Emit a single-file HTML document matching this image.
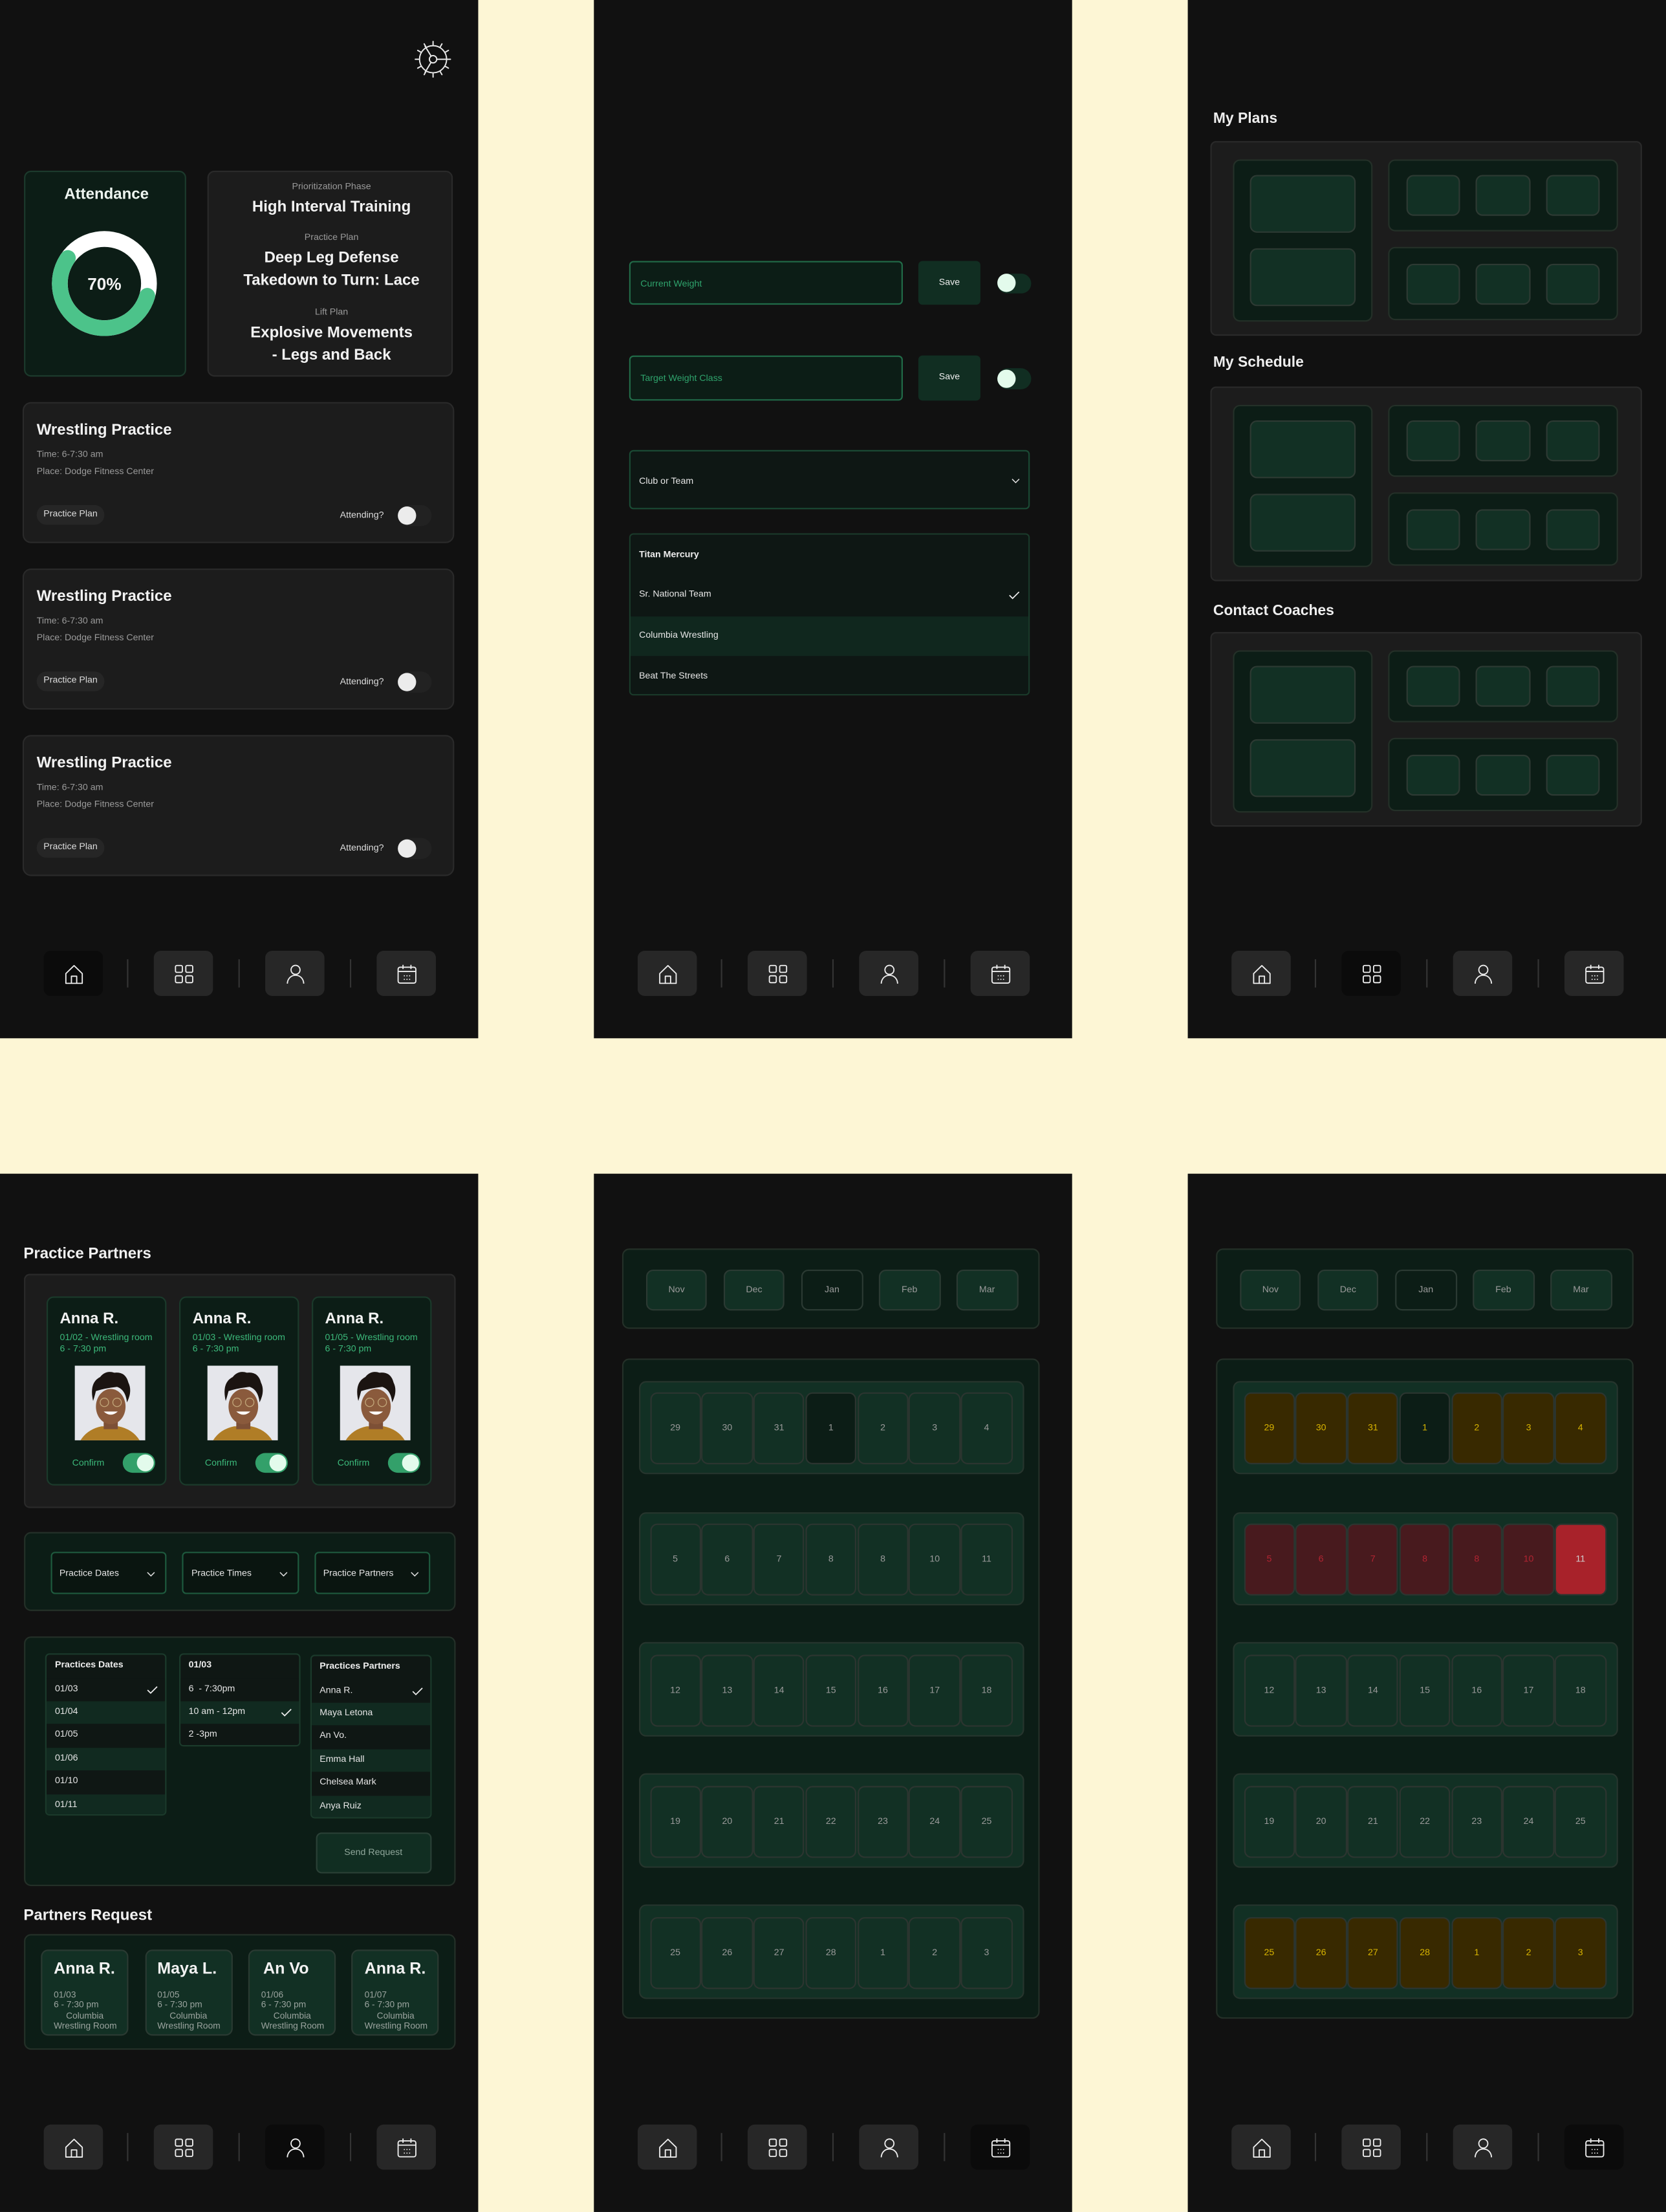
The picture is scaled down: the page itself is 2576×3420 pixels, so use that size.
<!DOCTYPE html>
<html><head><meta charset="utf-8"><style>
*{margin:0;padding:0;box-sizing:border-box}
html,body{width:2576px;height:3420px;overflow:hidden;background:#fdf6d5}
#w{position:absolute;left:0;top:0;width:1181px;height:1568px;transform:scale(2.1812,2.1811);transform-origin:0 0;font-family:"Liberation Sans",sans-serif;color:#eee}
.p{position:absolute;width:339px;height:736px;background:#111;overflow:hidden}
.a{position:absolute}
.t{position:absolute;white-space:nowrap}
.b{font-weight:bold}
.card{position:absolute;background:#1c1c1c;border:0.6px solid #2a2a2a;border-radius:6px}
.g{position:absolute;background:#0c1d16;border:0.6px solid #243028;border-radius:5px}
.gg{position:absolute;background:#123024;border:0.6px solid #2d3a33;border-radius:5px}
.nb{position:absolute;top:674px;width:42px;height:32px;border-radius:5px;background:#272727}
.nb.on{background:#0b0b0b}
.nb svg{position:absolute;left:13.5px;top:8.5px;width:15px;height:15px}
.sep{position:absolute;top:680px;width:0.6px;height:20px;background:#343434}
.small{font-size:6.5px;color:#9a9a9a}
.pill{position:absolute;left:9px;top:72px;width:48px;height:14px;border-radius:7px;background:#262626;font-size:6.5px;line-height:14px;text-align:center;color:#ddd}
.tg{position:absolute;width:24px;height:15px;border-radius:8px;background:#222}
.tg i{position:absolute;left:0;top:1px;width:13px;height:13px;border-radius:50%;background:#ececec}
.wk{position:absolute;left:31.5px;width:273px;height:66.7px;background:#123024;border:0.6px solid #26352d;border-radius:5px;padding:7.4px 0 0 7px;display:flex}
.wk div{width:36.4px;height:51.5px;margin-right:0.4px;border:0.6px solid #2c3530;border-radius:5px;background:#123024;font-size:6.5px;color:#9a9a9a;display:flex;align-items:center;justify-content:center}
.wk div.d{background:#0c1d16}
.y div{background:#382900;color:#d8b400}
.y div.d{background:#0c1d16;color:#d8b400}
.r div{background:#481a1e;color:#b22432}
.r div.hot{background:#a8222a;color:#cfcfcf}
.mo{position:absolute;top:14px;width:43.8px;height:29.2px;border-radius:5px;background:#123024;border:0.6px solid #2b3a33;font-size:6.5px;color:#9a9a9a;line-height:28px;text-align:center}
.mo.d{background:#0c1d16}
.row{position:absolute;left:0;width:100%;height:16.4px;font-size:6.5px;line-height:16.4px;padding-left:5.6px;color:#e6e6e6}
.dk{background:#0f1714}.gr{background:#112a20}
.col{position:absolute;top:11.3px;background:#0f1714;border:0.6px solid #1b3a2b;border-radius:3px;overflow:hidden}
.dd{position:absolute;top:13.5px;width:82.5px;height:29.6px;background:#0a1510;border:0.6px solid #1e5a3e;border-radius:3px;font-size:6.5px;line-height:29px;padding-left:5.6px;color:#e6e6e6}
.chev{position:absolute;right:7px;top:12.5px;width:6px;height:4px}
.pc{position:absolute;top:86.5px;width:84.8px;height:134px;background:#0c1d16;border:0.6px solid #1b3a2b;border-radius:5px}
.pc .n{position:absolute;left:8.5px;top:9px;font-size:11px;font-weight:bold;color:#f2f2f2}
.pc .l{position:absolute;left:8.5px;font-size:6.5px;color:#3cb87a;white-space:nowrap}
.pc svg{position:absolute;left:18.8px;top:48.3px;width:50px;height:53.2px}
.pc .c{position:absolute;left:17.3px;top:114px;font-size:6.5px;color:#3cb87a}
.pc .tgon{position:absolute;left:52.8px;top:110.2px;width:23.6px;height:14.6px;border-radius:8px;background:#33a06a}
.pc .tgon i{position:absolute;right:1px;top:1px;width:12.6px;height:12.6px;border-radius:50%;background:#e3fbec}
.rq{position:absolute;top:10.2px;width:62px;height:61.8px;background:#123024;border:0.6px solid #2a3a32;border-radius:5px;overflow:hidden}
.rq .n{position:absolute;left:8px;top:7.5px;font-size:11.5px;font-weight:bold;color:#f2f2f2;white-space:nowrap}
.rq .l{position:absolute;left:8px;font-size:6.3px;color:#9aa39e;white-space:nowrap;line-height:7.5px;top:28px}
</style></head><body><div id="w">

<!-- ================= PANEL 1 ================= -->
<div class="p" style="left:0;top:0">
  <svg class="a" style="left:293px;top:28px" width="28" height="28" viewBox="-14 -14 28 28" fill="none" stroke="#e8e8e8" stroke-width="0.9" stroke-linecap="round">
    <circle r="9.6"/><circle r="2.6"/>
    <line x1="2.6" y1="0" x2="12.3" y2="0"/>
    <line x1="-1.4" y1="-2.2" x2="-5.7" y2="-9.3"/>
    <line x1="-1.4" y1="2.2" x2="-5.7" y2="9.3"/>
    <g>
      <line x1="0" y1="-10.2" x2="0" y2="-12.6"/>
      <line x1="5.1" y1="-8.8" x2="6.3" y2="-10.9"/>
      <line x1="8.8" y1="-5.1" x2="10.9" y2="-6.3"/>
      <line x1="8.8" y1="5.1" x2="10.9" y2="6.3"/>
      <line x1="5.1" y1="8.8" x2="6.3" y2="10.9"/>
      <line x1="0" y1="10.2" x2="0" y2="12.6"/>
      <line x1="-5.1" y1="8.8" x2="-6.3" y2="10.9"/>
      <line x1="-8.8" y1="5.1" x2="-10.9" y2="6.3"/>
      <line x1="-10.2" y1="0" x2="-12.6" y2="0"/>
      <line x1="-8.8" y1="-5.1" x2="-10.9" y2="-6.3"/>
      <line x1="-5.1" y1="-8.8" x2="-6.3" y2="-10.9"/>
    </g>
  </svg>

  <div class="g" style="left:17px;top:121px;width:115px;height:146px;border-color:#1c3a2c">
    <div class="t b" style="left:0;width:115px;text-align:center;top:10px;font-size:11px;color:#eef5f0">Attendance</div>
    <svg class="a" style="left:16px;top:39px" width="80" height="80" viewBox="0 0 80 80">
      <circle cx="40" cy="40" r="31.6" fill="none" stroke="#ffffff" stroke-width="11.2"/>
      <circle cx="40" cy="40" r="31.6" fill="none" stroke="#4cc38a" stroke-width="11.2" stroke-linecap="round" stroke-dasharray="109.7 400" transform="rotate(16 40 40)"/>
      <text x="40" y="44.5" text-anchor="middle" font-family="Liberation Sans" font-weight="bold" font-size="12" fill="#f2f2f2">70%</text>
    </svg>
  </div>

  <div class="card" style="left:147px;top:121px;width:174px;height:146px;border-radius:5px">
    <div class="t" style="left:0;width:174px;text-align:center;top:7px;font-size:6.5px;color:#9a9a9a">Prioritization Phase</div>
    <div class="t b" style="left:0;width:174px;text-align:center;top:19px;font-size:11px;color:#f2f2f2">High Interval Training</div>
    <div class="t" style="left:0;width:174px;text-align:center;top:43px;font-size:6.5px;color:#9a9a9a">Practice Plan</div>
    <div class="t b" style="left:0;width:174px;text-align:center;top:53px;font-size:11px;line-height:16px;color:#f2f2f2;white-space:normal">Deep Leg Defense<br>Takedown to Turn: Lace</div>
    <div class="t" style="left:0;width:174px;text-align:center;top:96px;font-size:6.5px;color:#9a9a9a">Lift Plan</div>
    <div class="t b" style="left:0;width:174px;text-align:center;top:106px;font-size:11px;line-height:16px;color:#f2f2f2;white-space:normal">Explosive Movements<br>- Legs and Back</div>
  </div>

  <div class="card" style="left:16px;top:285px;width:306px;height:100px">
    <div class="t b" style="left:9px;top:13px;font-size:11px;color:#f2f2f2">Wrestling Practice</div>
    <div class="t small" style="left:9px;top:33px">Time: 6-7:30 am</div>
    <div class="t small" style="left:9px;top:45px">Place: Dodge Fitness Center</div>
    <div class="pill">Practice Plan</div>
    <div class="t" style="left:224px;top:76px;font-size:6.5px;color:#ddd">Attending?</div>
    <div class="tg" style="left:265px;top:72px"><i></i></div>
  </div>
  <div class="card" style="left:16px;top:403px;width:306px;height:100px">
    <div class="t b" style="left:9px;top:13px;font-size:11px;color:#f2f2f2">Wrestling Practice</div>
    <div class="t small" style="left:9px;top:33px">Time: 6-7:30 am</div>
    <div class="t small" style="left:9px;top:45px">Place: Dodge Fitness Center</div>
    <div class="pill">Practice Plan</div>
    <div class="t" style="left:224px;top:76px;font-size:6.5px;color:#ddd">Attending?</div>
    <div class="tg" style="left:265px;top:72px"><i></i></div>
  </div>
  <div class="card" style="left:16px;top:521px;width:306px;height:100px">
    <div class="t b" style="left:9px;top:13px;font-size:11px;color:#f2f2f2">Wrestling Practice</div>
    <div class="t small" style="left:9px;top:33px">Time: 6-7:30 am</div>
    <div class="t small" style="left:9px;top:45px">Place: Dodge Fitness Center</div>
    <div class="pill">Practice Plan</div>
    <div class="t" style="left:224px;top:76px;font-size:6.5px;color:#ddd">Attending?</div>
    <div class="tg" style="left:265px;top:72px"><i></i></div>
  </div>

  <div class="nb on" style="left:31px"><svg viewBox="0 0 16 16" fill="none" stroke="#eee" stroke-width="0.9" stroke-linejoin="round"><path d="M1.8 15V7.6L8 1.6l6.2 6V15z"/><path d="M6 15V9.6h4V15"/></svg></div>
  <div class="sep" style="left:90px"></div>
  <div class="nb" style="left:109px"><svg viewBox="0 0 16 16" fill="none" stroke="#eee" stroke-width="0.9"><rect x="1.5" y="1.5" width="5.2" height="5.2" rx="1"/><rect x="9.3" y="1.5" width="5.2" height="5.2" rx="1"/><rect x="1.5" y="9.3" width="5.2" height="5.2" rx="1"/><rect x="9.3" y="9.3" width="5.2" height="5.2" rx="1"/></svg></div>
  <div class="sep" style="left:169px"></div>
  <div class="nb" style="left:188px"><svg viewBox="0 0 16 16" fill="none" stroke="#eee" stroke-width="0.9"><circle cx="8" cy="4.8" r="3.4"/><path d="M1.8 15.2C2 11.2 4.8 8.9 8 8.9s6 2.3 6.2 6.3"/></svg></div>
  <div class="sep" style="left:248px"></div>
  <div class="nb" style="left:267px"><svg viewBox="0 0 16 16" fill="none" stroke="#eee" stroke-width="0.9"><rect x="1.3" y="2.8" width="13.4" height="12" rx="1.5"/><path d="M1.3 6h13.4M5 1v3.2M11 1v3.2"/><g fill="#eee" stroke="none"><circle cx="6" cy="9.3" r=".45"/><circle cx="8" cy="9.3" r=".45"/><circle cx="10" cy="9.3" r=".45"/><circle cx="6" cy="12" r=".45"/><circle cx="8" cy="12" r=".45"/><circle cx="10" cy="12" r=".45"/></g></svg></div>
</div>

<!-- ================= PANEL 2 ================= -->
<div class="p" style="left:421px;top:0">
  <div class="a" style="left:25px;top:185px;width:194px;height:31px;background:#0c1d16;border:0.7px solid #216b48;border-radius:3px"><div class="t" style="left:7px;top:11.5px;font-size:6.5px;color:#2fa36c">Current Weight</div></div>
  <div class="a" style="left:230px;top:185px;width:44px;height:31px;background:#112e22;border-radius:3px;font-size:6.5px;line-height:31px;text-align:center;color:#eee">Save</div>
  <div class="tg" style="left:286px;top:193.5px;width:23.5px;height:14.5px;background:#112e22"><i style="top:0.75px;background:#e3fbec"></i></div>

  <div class="a" style="left:25px;top:252px;width:194px;height:32px;background:#0c1d16;border:0.7px solid #216b48;border-radius:3px"><div class="t" style="left:7px;top:12px;font-size:6.5px;color:#2fa36c">Target Weight Class</div></div>
  <div class="a" style="left:230px;top:252px;width:44px;height:32px;background:#112e22;border-radius:3px;font-size:6.5px;line-height:32px;text-align:center;color:#eee">Save</div>
  <div class="tg" style="left:286px;top:261px;width:23.5px;height:14.5px;background:#112e22"><i style="top:0.75px;background:#e3fbec"></i></div>

  <div class="a" style="left:25px;top:319px;width:284px;height:42px;background:#0e1714;border:0.7px solid #1a4a34;border-radius:3px">
    <div class="t" style="left:6px;top:17.5px;font-size:6.5px;color:#e6e6e6">Club or Team</div>
    <svg class="a" style="left:270px;top:19px" width="6" height="4" viewBox="0 0 6 4" fill="none" stroke="#ddd" stroke-width="0.7"><path d="M0.5 0.6 3 3.1 5.5 0.6"/></svg>
  </div>
  <div class="a" style="left:25px;top:378px;width:284px;height:115px;background:#0e1714;border:0.6px solid #1a3a2a;border-radius:3px;overflow:hidden">
    <div class="t b" style="left:6px;top:11px;font-size:6.5px;color:#eee">Titan Mercury</div>
    <div class="t" style="left:6px;top:39px;font-size:6.5px;color:#e6e6e6">Sr. National Team</div>
    <svg class="a" style="left:268px;top:39.5px" width="8" height="6" viewBox="0 0 8 6" fill="none" stroke="#eee" stroke-width="0.8"><path d="M0.6 3 2.8 5.2 7.4 0.6"/></svg>
    <div class="a" style="left:0;top:58px;width:100%;height:28px;background:#10271e"></div>
    <div class="t" style="left:6px;top:68px;font-size:6.5px;color:#e6e6e6">Columbia Wrestling</div>
    <div class="t" style="left:6px;top:97px;font-size:6.5px;color:#e6e6e6">Beat The Streets</div>
  </div>

  <div class="nb" style="left:31px"><svg viewBox="0 0 16 16" fill="none" stroke="#eee" stroke-width="0.9" stroke-linejoin="round"><path d="M1.8 15V7.6L8 1.6l6.2 6V15z"/><path d="M6 15V9.6h4V15"/></svg></div>
  <div class="sep" style="left:90px"></div>
  <div class="nb" style="left:109px"><svg viewBox="0 0 16 16" fill="none" stroke="#eee" stroke-width="0.9"><rect x="1.5" y="1.5" width="5.2" height="5.2" rx="1"/><rect x="9.3" y="1.5" width="5.2" height="5.2" rx="1"/><rect x="1.5" y="9.3" width="5.2" height="5.2" rx="1"/><rect x="9.3" y="9.3" width="5.2" height="5.2" rx="1"/></svg></div>
  <div class="sep" style="left:169px"></div>
  <div class="nb" style="left:188px"><svg viewBox="0 0 16 16" fill="none" stroke="#eee" stroke-width="0.9"><circle cx="8" cy="4.8" r="3.4"/><path d="M1.8 15.2C2 11.2 4.8 8.9 8 8.9s6 2.3 6.2 6.3"/></svg></div>
  <div class="sep" style="left:248px"></div>
  <div class="nb" style="left:267px"><svg viewBox="0 0 16 16" fill="none" stroke="#eee" stroke-width="0.9"><rect x="1.3" y="2.8" width="13.4" height="12" rx="1.5"/><path d="M1.3 6h13.4M5 1v3.2M11 1v3.2"/><g fill="#eee" stroke="none"><circle cx="6" cy="9.3" r=".45"/><circle cx="8" cy="9.3" r=".45"/><circle cx="10" cy="9.3" r=".45"/><circle cx="6" cy="12" r=".45"/><circle cx="8" cy="12" r=".45"/><circle cx="10" cy="12" r=".45"/></g></svg></div>
</div>

<!-- ================= PANEL 3 ================= -->
<div class="p" style="left:842px;top:0">
  <div class="t b" style="left:18px;top:78px;font-size:10.5px;color:#eee">My Plans</div>
  <div class="card" style="left:16.2px;top:100.4px;width:306px;height:138px;border-radius:4px">
    <div class="g" style="left:14.5px;top:11.7px;width:99.5px;height:114.7px"></div>
    <div class="gg" style="left:26.4px;top:23px;width:75.7px;height:40.4px"></div>
    <div class="gg" style="left:26.4px;top:75px;width:75.7px;height:40.4px"></div>
    <div class="g" style="left:124.8px;top:11.7px;width:163.4px;height:51.3px"></div>
    <div class="g" style="left:124.8px;top:74px;width:163.4px;height:51.4px"></div>
    <div class="gg" style="left:137.8px;top:23px;width:38.3px;height:29px"></div>
    <div class="gg" style="left:187.3px;top:23px;width:38.3px;height:29px"></div>
    <div class="gg" style="left:236.9px;top:23px;width:38.3px;height:29px"></div>
    <div class="gg" style="left:137.8px;top:85.2px;width:38.3px;height:29.2px"></div>
    <div class="gg" style="left:187.3px;top:85.2px;width:38.3px;height:29.2px"></div>
    <div class="gg" style="left:236.9px;top:85.2px;width:38.3px;height:29.2px"></div>
  </div>
  <div class="t b" style="left:18px;top:251px;font-size:10.5px;color:#eee">My Schedule</div>
  <div class="card" style="left:16.2px;top:274.4px;width:306px;height:138px;border-radius:4px">
    <div class="g" style="left:14.5px;top:11.7px;width:99.5px;height:114.7px"></div>
    <div class="gg" style="left:26.4px;top:23px;width:75.7px;height:40.4px"></div>
    <div class="gg" style="left:26.4px;top:75px;width:75.7px;height:40.4px"></div>
    <div class="g" style="left:124.8px;top:11.7px;width:163.4px;height:51.3px"></div>
    <div class="g" style="left:124.8px;top:74px;width:163.4px;height:51.4px"></div>
    <div class="gg" style="left:137.8px;top:23px;width:38.3px;height:29px"></div>
    <div class="gg" style="left:187.3px;top:23px;width:38.3px;height:29px"></div>
    <div class="gg" style="left:236.9px;top:23px;width:38.3px;height:29px"></div>
    <div class="gg" style="left:137.8px;top:85.2px;width:38.3px;height:29.2px"></div>
    <div class="gg" style="left:187.3px;top:85.2px;width:38.3px;height:29.2px"></div>
    <div class="gg" style="left:236.9px;top:85.2px;width:38.3px;height:29.2px"></div>
  </div>
  <div class="t b" style="left:18px;top:427px;font-size:10.5px;color:#eee">Contact Coaches</div>
  <div class="card" style="left:16.2px;top:448.4px;width:306px;height:138px;border-radius:4px">
    <div class="g" style="left:14.5px;top:11.7px;width:99.5px;height:114.7px"></div>
    <div class="gg" style="left:26.4px;top:23px;width:75.7px;height:40.4px"></div>
    <div class="gg" style="left:26.4px;top:75px;width:75.7px;height:40.4px"></div>
    <div class="g" style="left:124.8px;top:11.7px;width:163.4px;height:51.3px"></div>
    <div class="g" style="left:124.8px;top:74px;width:163.4px;height:51.4px"></div>
    <div class="gg" style="left:137.8px;top:23px;width:38.3px;height:29px"></div>
    <div class="gg" style="left:187.3px;top:23px;width:38.3px;height:29px"></div>
    <div class="gg" style="left:236.9px;top:23px;width:38.3px;height:29px"></div>
    <div class="gg" style="left:137.8px;top:85.2px;width:38.3px;height:29.2px"></div>
    <div class="gg" style="left:187.3px;top:85.2px;width:38.3px;height:29.2px"></div>
    <div class="gg" style="left:236.9px;top:85.2px;width:38.3px;height:29.2px"></div>
  </div>

  <div class="nb" style="left:31px"><svg viewBox="0 0 16 16" fill="none" stroke="#eee" stroke-width="0.9" stroke-linejoin="round"><path d="M1.8 15V7.6L8 1.6l6.2 6V15z"/><path d="M6 15V9.6h4V15"/></svg></div>
  <div class="sep" style="left:90px"></div>
  <div class="nb on" style="left:109px"><svg viewBox="0 0 16 16" fill="none" stroke="#eee" stroke-width="0.9"><rect x="1.5" y="1.5" width="5.2" height="5.2" rx="1"/><rect x="9.3" y="1.5" width="5.2" height="5.2" rx="1"/><rect x="1.5" y="9.3" width="5.2" height="5.2" rx="1"/><rect x="9.3" y="9.3" width="5.2" height="5.2" rx="1"/></svg></div>
  <div class="sep" style="left:169px"></div>
  <div class="nb" style="left:188px"><svg viewBox="0 0 16 16" fill="none" stroke="#eee" stroke-width="0.9"><circle cx="8" cy="4.8" r="3.4"/><path d="M1.8 15.2C2 11.2 4.8 8.9 8 8.9s6 2.3 6.2 6.3"/></svg></div>
  <div class="sep" style="left:248px"></div>
  <div class="nb" style="left:267px"><svg viewBox="0 0 16 16" fill="none" stroke="#eee" stroke-width="0.9"><rect x="1.3" y="2.8" width="13.4" height="12" rx="1.5"/><path d="M1.3 6h13.4M5 1v3.2M11 1v3.2"/><g fill="#eee" stroke="none"><circle cx="6" cy="9.3" r=".45"/><circle cx="8" cy="9.3" r=".45"/><circle cx="10" cy="9.3" r=".45"/><circle cx="6" cy="12" r=".45"/><circle cx="8" cy="12" r=".45"/><circle cx="10" cy="12" r=".45"/></g></svg></div>
</div>

<!-- ================= PANEL 4 ================= -->
<div class="p" style="left:0;top:832px">
  <div class="t b" style="left:16.7px;top:51px;font-size:11px;color:#f0f0f0">Practice Partners</div>
  <div class="card" style="left:16.5px;top:70.5px;width:306px;height:166px;border-radius:4px"></div>

  <div class="pc" style="left:32.9px">
    <div class="n">Anna R.</div>
    <div class="l" style="top:25px">01/02 - Wrestling room</div>
    <div class="l" style="top:33px">6 - 7:30 pm</div>
    <svg viewBox="0 0 50 53"><rect width="50" height="53" fill="#e5e6eb"/><path d="M4 53Q9 45 19 43h12q10 2 15 10z" fill="#b07d26"/><rect x="20.5" y="36" width="10" height="9" fill="#7d5036"/><ellipse cx="25.5" cy="29" rx="10.5" ry="12.5" fill="#8a5a3c"/><path d="M13 25Q10 12 18 8Q22 3 28 5Q36 4 38 12Q41 18 37 26Q36 17 30 15Q21 16 15 18Q14 22 13 25z" fill="#1b1411"/><circle cx="21" cy="26" r="3" fill="none" stroke="#c2a77a" stroke-width=".6"/><circle cx="30" cy="26" r="3" fill="none" stroke="#c2a77a" stroke-width=".6"/><path d="M20.5 32.5Q25.5 37 30.5 32.5z" fill="#fff"/></svg>
    <div class="c">Confirm</div>
    <div class="tgon"><i></i></div>
  </div>
  <div class="pc" style="left:127px">
    <div class="n">Anna R.</div>
    <div class="l" style="top:25px">01/03 - Wrestling room</div>
    <div class="l" style="top:33px">6 - 7:30 pm</div>
    <svg viewBox="0 0 50 53"><rect width="50" height="53" fill="#e5e6eb"/><path d="M4 53Q9 45 19 43h12q10 2 15 10z" fill="#b07d26"/><rect x="20.5" y="36" width="10" height="9" fill="#7d5036"/><ellipse cx="25.5" cy="29" rx="10.5" ry="12.5" fill="#8a5a3c"/><path d="M13 25Q10 12 18 8Q22 3 28 5Q36 4 38 12Q41 18 37 26Q36 17 30 15Q21 16 15 18Q14 22 13 25z" fill="#1b1411"/><circle cx="21" cy="26" r="3" fill="none" stroke="#c2a77a" stroke-width=".6"/><circle cx="30" cy="26" r="3" fill="none" stroke="#c2a77a" stroke-width=".6"/><path d="M20.5 32.5Q25.5 37 30.5 32.5z" fill="#fff"/></svg>
    <div class="c">Confirm</div>
    <div class="tgon"><i></i></div>
  </div>
  <div class="pc" style="left:220.9px">
    <div class="n">Anna R.</div>
    <div class="l" style="top:25px">01/05 - Wrestling room</div>
    <div class="l" style="top:33px">6 - 7:30 pm</div>
    <svg viewBox="0 0 50 53"><rect width="50" height="53" fill="#e5e6eb"/><path d="M4 53Q9 45 19 43h12q10 2 15 10z" fill="#b07d26"/><rect x="20.5" y="36" width="10" height="9" fill="#7d5036"/><ellipse cx="25.5" cy="29" rx="10.5" ry="12.5" fill="#8a5a3c"/><path d="M13 25Q10 12 18 8Q22 3 28 5Q36 4 38 12Q41 18 37 26Q36 17 30 15Q21 16 15 18Q14 22 13 25z" fill="#1b1411"/><circle cx="21" cy="26" r="3" fill="none" stroke="#c2a77a" stroke-width=".6"/><circle cx="30" cy="26" r="3" fill="none" stroke="#c2a77a" stroke-width=".6"/><path d="M20.5 32.5Q25.5 37 30.5 32.5z" fill="#fff"/></svg>
    <div class="c">Confirm</div>
    <div class="tgon"><i></i></div>
  </div>

  <div class="g" style="left:16.5px;top:253.7px;width:306px;height:56.8px;border-color:#243028">
    <div class="dd" style="left:18px">Practice Dates<svg class="chev" viewBox="0 0 6 4" fill="none" stroke="#ddd" stroke-width="0.7"><path d="M0.5 0.6 3 3.1 5.5 0.6"/></svg></div>
    <div class="dd" style="left:111.6px">Practice Times<svg class="chev" viewBox="0 0 6 4" fill="none" stroke="#ddd" stroke-width="0.7"><path d="M0.5 0.6 3 3.1 5.5 0.6"/></svg></div>
    <div class="dd" style="left:205px">Practice Partners<svg class="chev" viewBox="0 0 6 4" fill="none" stroke="#ddd" stroke-width="0.7"><path d="M0.5 0.6 3 3.1 5.5 0.6"/></svg></div>
  </div>

  <div class="g" style="left:16.5px;top:327.7px;width:306px;height:177.7px">
    <div class="col" style="left:14.9px;width:85.9px;height:115.3px">
      <div class="t b" style="left:5.6px;top:4.5px;font-size:6.5px;color:#eee">Practices Dates</div>
      <div class="row dk" style="top:16.6px">01/03<svg class="a" style="left:71px;top:5.5px" width="8" height="6" viewBox="0 0 8 6" fill="none" stroke="#eee" stroke-width="0.8"><path d="M0.6 3 2.8 5.2 7.4 0.6"/></svg></div>
      <div class="row gr" style="top:33px">01/04</div>
      <div class="row dk" style="top:49.4px">01/05</div>
      <div class="row gr" style="top:65.8px">01/06</div>
      <div class="row dk" style="top:82.2px">01/10</div>
      <div class="row gr" style="top:98.6px">01/11</div>
    </div>
    <div class="col" style="left:109.6px;width:86.2px;height:66.3px">
      <div class="t b" style="left:5.6px;top:4.5px;font-size:6.5px;color:#eee">01/03</div>
      <div class="row dk" style="top:16.6px">6&nbsp; - 7:30pm</div>
      <div class="row gr" style="top:33px">10 am - 12pm<svg class="a" style="left:71px;top:5.5px" width="8" height="6" viewBox="0 0 8 6" fill="none" stroke="#eee" stroke-width="0.8"><path d="M0.6 3 2.8 5.2 7.4 0.6"/></svg></div>
      <div class="row dk" style="top:49.4px">2 -3pm</div>
    </div>
    <div class="col" style="left:202.5px;width:85.9px;height:116.3px;top:12.3px">
      <div class="t b" style="left:5.6px;top:4.5px;font-size:6.5px;color:#eee">Practices Partners</div>
      <div class="row dk" style="top:16.6px">Anna R.<svg class="a" style="left:71px;top:5.5px" width="8" height="6" viewBox="0 0 8 6" fill="none" stroke="#eee" stroke-width="0.8"><path d="M0.6 3 2.8 5.2 7.4 0.6"/></svg></div>
      <div class="row gr" style="top:33px">Maya Letona</div>
      <div class="row dk" style="top:49.4px">An Vo.</div>
      <div class="row gr" style="top:65.8px">Emma Hall</div>
      <div class="row dk" style="top:82.2px">Chelsea Mark</div>
      <div class="row gr" style="top:98.6px">Anya Ruiz</div>
    </div>
    <div class="a" style="left:206.1px;top:138.1px;width:82.1px;height:28.8px;background:#112e22;border:0.6px solid #2a4036;border-radius:4px;font-size:6.5px;line-height:27.6px;text-align:center;color:#8fa69a">Send Request</div>
  </div>

  <div class="t b" style="left:16.7px;top:520px;font-size:11px;color:#f0f0f0">Partners Request</div>
  <div class="g" style="left:16.5px;top:538.5px;width:306px;height:82.4px">
    <div class="rq" style="left:11.6px"><div class="n">Anna R.</div><div class="l">01/03<br>6 - 7:30 pm<br>&nbsp;&nbsp;&nbsp;&nbsp;&nbsp;Columbia<br>Wrestling Room</div></div>
    <div class="rq" style="left:85px"><div class="n">Maya L.</div><div class="l">01/05<br>6 - 7:30 pm<br>&nbsp;&nbsp;&nbsp;&nbsp;&nbsp;Columbia<br>Wrestling Room</div></div>
    <div class="rq" style="left:158.6px"><div class="n" style="left:9.5px">An Vo</div><div class="l">01/06<br>6 - 7:30 pm<br>&nbsp;&nbsp;&nbsp;&nbsp;&nbsp;Columbia<br>Wrestling Room</div></div>
    <div class="rq" style="left:231.9px"><div class="n">Anna R.</div><div class="l">01/07<br>6 - 7:30 pm<br>&nbsp;&nbsp;&nbsp;&nbsp;&nbsp;Columbia<br>Wrestling Room</div></div>
  </div>

  <div class="nb" style="left:31px"><svg viewBox="0 0 16 16" fill="none" stroke="#eee" stroke-width="0.9" stroke-linejoin="round"><path d="M1.8 15V7.6L8 1.6l6.2 6V15z"/><path d="M6 15V9.6h4V15"/></svg></div>
  <div class="sep" style="left:90px"></div>
  <div class="nb" style="left:109px"><svg viewBox="0 0 16 16" fill="none" stroke="#eee" stroke-width="0.9"><rect x="1.5" y="1.5" width="5.2" height="5.2" rx="1"/><rect x="9.3" y="1.5" width="5.2" height="5.2" rx="1"/><rect x="1.5" y="9.3" width="5.2" height="5.2" rx="1"/><rect x="9.3" y="9.3" width="5.2" height="5.2" rx="1"/></svg></div>
  <div class="sep" style="left:169px"></div>
  <div class="nb on" style="left:188px"><svg viewBox="0 0 16 16" fill="none" stroke="#eee" stroke-width="0.9"><circle cx="8" cy="4.8" r="3.4"/><path d="M1.8 15.2C2 11.2 4.8 8.9 8 8.9s6 2.3 6.2 6.3"/></svg></div>
  <div class="sep" style="left:248px"></div>
  <div class="nb" style="left:267px"><svg viewBox="0 0 16 16" fill="none" stroke="#eee" stroke-width="0.9"><rect x="1.3" y="2.8" width="13.4" height="12" rx="1.5"/><path d="M1.3 6h13.4M5 1v3.2M11 1v3.2"/><g fill="#eee" stroke="none"><circle cx="6" cy="9.3" r=".45"/><circle cx="8" cy="9.3" r=".45"/><circle cx="10" cy="9.3" r=".45"/><circle cx="6" cy="12" r=".45"/><circle cx="8" cy="12" r=".45"/><circle cx="10" cy="12" r=".45"/></g></svg></div>
</div>

<!-- ================= PANEL 5 ================= -->
<div class="p" style="left:421px;top:832px">
  <div class="g" style="left:20.2px;top:53.2px;width:295.6px;height:57.3px">
    <div class="mo" style="left:15.5px">Nov</div>
    <div class="mo" style="left:70.5px">Dec</div>
    <div class="mo d" style="left:125.7px">Jan</div>
    <div class="mo" style="left:180.6px">Feb</div>
    <div class="mo" style="left:235.6px">Mar</div>
  </div>
  <div class="g" style="left:20.2px;top:131.1px;width:295.6px;height:468.2px"></div>
  <div class="wk" style="top:146.6px"><div>29</div><div>30</div><div>31</div><div class="d">1</div><div>2</div><div>3</div><div>4</div></div>
  <div class="wk" style="top:239.5px"><div>5</div><div>6</div><div>7</div><div>8</div><div>8</div><div>10</div><div>11</div></div>
  <div class="wk" style="top:332.4px"><div>12</div><div>13</div><div>14</div><div>15</div><div>16</div><div>17</div><div>18</div></div>
  <div class="wk" style="top:425.3px"><div>19</div><div>20</div><div>21</div><div>22</div><div>23</div><div>24</div><div>25</div></div>
  <div class="wk" style="top:518.2px"><div>25</div><div>26</div><div>27</div><div>28</div><div>1</div><div>2</div><div>3</div></div>

  <div class="nb" style="left:31px"><svg viewBox="0 0 16 16" fill="none" stroke="#eee" stroke-width="0.9" stroke-linejoin="round"><path d="M1.8 15V7.6L8 1.6l6.2 6V15z"/><path d="M6 15V9.6h4V15"/></svg></div>
  <div class="sep" style="left:90px"></div>
  <div class="nb" style="left:109px"><svg viewBox="0 0 16 16" fill="none" stroke="#eee" stroke-width="0.9"><rect x="1.5" y="1.5" width="5.2" height="5.2" rx="1"/><rect x="9.3" y="1.5" width="5.2" height="5.2" rx="1"/><rect x="1.5" y="9.3" width="5.2" height="5.2" rx="1"/><rect x="9.3" y="9.3" width="5.2" height="5.2" rx="1"/></svg></div>
  <div class="sep" style="left:169px"></div>
  <div class="nb" style="left:188px"><svg viewBox="0 0 16 16" fill="none" stroke="#eee" stroke-width="0.9"><circle cx="8" cy="4.8" r="3.4"/><path d="M1.8 15.2C2 11.2 4.8 8.9 8 8.9s6 2.3 6.2 6.3"/></svg></div>
  <div class="sep" style="left:248px"></div>
  <div class="nb on" style="left:267px"><svg viewBox="0 0 16 16" fill="none" stroke="#eee" stroke-width="0.9"><rect x="1.3" y="2.8" width="13.4" height="12" rx="1.5"/><path d="M1.3 6h13.4M5 1v3.2M11 1v3.2"/><g fill="#eee" stroke="none"><circle cx="6" cy="9.3" r=".45"/><circle cx="8" cy="9.3" r=".45"/><circle cx="10" cy="9.3" r=".45"/><circle cx="6" cy="12" r=".45"/><circle cx="8" cy="12" r=".45"/><circle cx="10" cy="12" r=".45"/></g></svg></div>
</div>

<!-- ================= PANEL 6 ================= -->
<div class="p" style="left:842px;top:832px">
  <div class="g" style="left:20.2px;top:53.2px;width:295.6px;height:57.3px">
    <div class="mo" style="left:15.5px">Nov</div>
    <div class="mo" style="left:70.5px">Dec</div>
    <div class="mo d" style="left:125.7px">Jan</div>
    <div class="mo" style="left:180.6px">Feb</div>
    <div class="mo" style="left:235.6px">Mar</div>
  </div>
  <div class="g" style="left:20.2px;top:131.1px;width:295.6px;height:468.2px"></div>
  <div class="wk y" style="top:146.6px"><div>29</div><div>30</div><div>31</div><div class="d">1</div><div>2</div><div>3</div><div>4</div></div>
  <div class="wk r" style="top:239.5px"><div>5</div><div>6</div><div>7</div><div>8</div><div>8</div><div>10</div><div class="hot">11</div></div>
  <div class="wk" style="top:332.4px"><div>12</div><div>13</div><div>14</div><div>15</div><div>16</div><div>17</div><div>18</div></div>
  <div class="wk" style="top:425.3px"><div>19</div><div>20</div><div>21</div><div>22</div><div>23</div><div>24</div><div>25</div></div>
  <div class="wk y" style="top:518.2px"><div>25</div><div>26</div><div>27</div><div>28</div><div>1</div><div>2</div><div>3</div></div>

  <div class="nb" style="left:31px"><svg viewBox="0 0 16 16" fill="none" stroke="#eee" stroke-width="0.9" stroke-linejoin="round"><path d="M1.8 15V7.6L8 1.6l6.2 6V15z"/><path d="M6 15V9.6h4V15"/></svg></div>
  <div class="sep" style="left:90px"></div>
  <div class="nb" style="left:109px"><svg viewBox="0 0 16 16" fill="none" stroke="#eee" stroke-width="0.9"><rect x="1.5" y="1.5" width="5.2" height="5.2" rx="1"/><rect x="9.3" y="1.5" width="5.2" height="5.2" rx="1"/><rect x="1.5" y="9.3" width="5.2" height="5.2" rx="1"/><rect x="9.3" y="9.3" width="5.2" height="5.2" rx="1"/></svg></div>
  <div class="sep" style="left:169px"></div>
  <div class="nb" style="left:188px"><svg viewBox="0 0 16 16" fill="none" stroke="#eee" stroke-width="0.9"><circle cx="8" cy="4.8" r="3.4"/><path d="M1.8 15.2C2 11.2 4.8 8.9 8 8.9s6 2.3 6.2 6.3"/></svg></div>
  <div class="sep" style="left:248px"></div>
  <div class="nb on" style="left:267px"><svg viewBox="0 0 16 16" fill="none" stroke="#eee" stroke-width="0.9"><rect x="1.3" y="2.8" width="13.4" height="12" rx="1.5"/><path d="M1.3 6h13.4M5 1v3.2M11 1v3.2"/><g fill="#eee" stroke="none"><circle cx="6" cy="9.3" r=".45"/><circle cx="8" cy="9.3" r=".45"/><circle cx="10" cy="9.3" r=".45"/><circle cx="6" cy="12" r=".45"/><circle cx="8" cy="12" r=".45"/><circle cx="10" cy="12" r=".45"/></g></svg></div>
</div>

</div></body></html>
